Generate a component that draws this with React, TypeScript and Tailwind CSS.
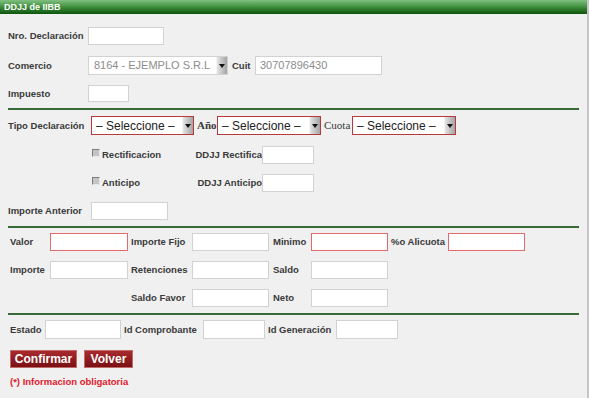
import React from 'react';

const lbl = 'text-[9.5px] font-bold text-[#3a3a3a] whitespace-nowrap leading-none';
const box = 'h-full bg-white border border-[#d2d2d2] shrink-0';
const boxRed = 'h-full bg-white border border-[#e26a6a] shrink-0';

function DropBtn() {
  return (
    <div className="w-[11px] h-full shrink-0 flex items-center justify-center bg-gradient-to-r from-[#e4e4e4] via-[#c4c4c4] to-[#a4a4a4] border-l border-[#f4f4f4]">
      <svg width="6" height="4" viewBox="0 0 6 4">
        <path d="M0 0h6L3 4z" fill="#111" />
      </svg>
    </div>
  );
}

function Seleccione({ w }: { w: string }) {
  return (
    <div className={`h-full flex items-stretch bg-white border border-[#b8383b] shrink-0 ${w}`}>
      <span className="flex-1 flex items-center pl-[4px] text-[12px] text-[#222] whitespace-nowrap">– Seleccione –</span>
      <DropBtn />
    </div>
  );
}

function Check() {
  return (
    <span className="w-[8px] h-[8px] mb-[4px] shrink-0 bg-[#c4c4c4] border-t border-l border-[#7c7c7c] border-b border-r border-b-[#e8e8e8] border-r-[#e8e8e8]" />
  );
}

function Line({ mt }: { mt: string }) {
  return <div className={`ml-[8px] w-[571px] h-[2px] bg-[#3a6a3a] ${mt}`} />;
}

export default function App() {
  return (
    <div className="w-[589px] h-[398px] overflow-hidden bg-[#f0f0f0] border-r-2 border-[#c6c6c6] font-['Liberation_Sans',Arial,sans-serif]">
      <div className="h-[14px] flex items-center pl-[4px] bg-gradient-to-b from-[#80c080] via-[#3e8e3e] to-[#0b560b]">
        <span className="text-[9px] font-bold text-white leading-none">DDJJ de IIBB</span>
      </div>

      <div className="flex items-center h-[18px] mt-[13px] pl-[8px]">
        <span className={`${lbl} w-[80px]`}>Nro. Declaración</span>
        <div className={`${box} w-[76px]`} />
      </div>

      <div className="flex items-center h-[19px] mt-[11px] pl-[8px]">
        <span className={`${lbl} w-[80px]`}>Comercio</span>
        <div className="w-[140px] h-full flex items-stretch bg-white border border-[#d2d2d2] shrink-0">
          <span className="flex-1 flex items-center pl-[5px] text-[11px] text-[#8c8c8c] whitespace-nowrap">8164 - EJEMPLO S.R.L</span>
          <DropBtn />
        </div>
        <span className={`${lbl} w-[27px] pl-[4px]`}>Cuit</span>
        <div className={`${box} w-[127px] flex items-center pl-[4px] text-[11px] text-[#8c8c8c]`}>30707896430</div>
      </div>

      <div className="flex items-center h-[17px] mt-[10px] pl-[8px]">
        <span className={`${lbl} w-[80px]`}>Impuesto</span>
        <div className={`${box} w-[41px]`} />
      </div>

      <Line mt="mt-[6px]" />

      <div className="flex items-center h-[19px] mt-[6px] pl-[8px]">
        <span className={`${lbl} w-[83px]`}>Tipo Declaración</span>
        <Seleccione w="w-[103px]" />
        <span className="w-[23px] pl-[3px] text-[11px] font-bold text-[#3a3a3a] font-['Liberation_Serif',serif] leading-none">Año</span>
        <Seleccione w="w-[104px]" />
        <span className="w-[31px] pl-[3px] text-[11px] text-[#3a3a3a] font-['Liberation_Serif',serif] leading-none">Cuota</span>
        <Seleccione w="w-[104px]" />
      </div>

      <div className="flex items-center h-[18px] mt-[11px] pl-[92px]">
        <Check />
        <span className={`${lbl} w-[92px] pl-[2px]`}>Rectificacion</span>
        <span className={`${lbl} w-[70px] text-right`}>DDJJ Rectifica</span>
        <div className={`${box} w-[52px]`} />
      </div>

      <div className="flex items-center h-[18px] mt-[10px] pl-[92px]">
        <Check />
        <span className={`${lbl} w-[92px] pl-[2px]`}>Anticipo</span>
        <span className={`${lbl} w-[70px] text-right`}>DDJJ Anticipo</span>
        <div className={`${box} w-[52px]`} />
      </div>

      <div className="flex items-center h-[18px] mt-[10px] pl-[8px]">
        <span className={`${lbl} w-[83px]`}>Importe Anterior</span>
        <div className={`${box} w-[77px]`} />
      </div>

      <Line mt="mt-[6px]" />

      <div className="flex items-center h-[18px] mt-[5px] pl-[10px]">
        <span className={`${lbl} w-[40px]`}>Valor</span>
        <div className={`${boxRed} w-[78px]`} />
        <span className={`${lbl} w-[64px] pl-[3px]`}>Importe Fijo</span>
        <div className={`${box} w-[77px]`} />
        <span className={`${lbl} w-[42px] pl-[4px]`}>Minimo</span>
        <div className={`${boxRed} w-[77px]`} />
        <span className={`${lbl} w-[60px] pl-[3px]`}>%o Alicuota</span>
        <div className={`${boxRed} w-[77px]`} />
      </div>

      <div className="flex items-center h-[18px] mt-[10px] pl-[10px]">
        <span className={`${lbl} w-[40px]`}>Importe</span>
        <div className={`${box} w-[78px]`} />
        <span className={`${lbl} w-[64px] pl-[3px]`}>Retenciones</span>
        <div className={`${box} w-[77px]`} />
        <span className={`${lbl} w-[42px] pl-[4px]`}>Saldo</span>
        <div className={`${box} w-[77px]`} />
      </div>

      <div className="flex items-center h-[18px] mt-[10px] pl-[128px]">
        <span className={`${lbl} w-[64px] pl-[3px]`}>Saldo Favor</span>
        <div className={`${box} w-[77px]`} />
        <span className={`${lbl} w-[42px] pl-[4px]`}>Neto</span>
        <div className={`${box} w-[77px]`} />
      </div>

      <Line mt="mt-[6px]" />

      <div className="flex items-center h-[19px] mt-[5px] pl-[10px]">
        <span className={`${lbl} w-[35px]`}>Estado</span>
        <div className={`${box} w-[76px]`} />
        <span className={`${lbl} w-[82px] pl-[3px]`}>Id Comprobante</span>
        <div className={`${box} w-[62px]`} />
        <span className={`${lbl} w-[71px] pl-[3px]`}>Id Generación</span>
        <div className={`${box} w-[62px]`} />
      </div>

      <div className="flex items-center gap-[7px] h-[18px] mt-[11px] pl-[10px]">
        <button className="w-[67px] h-full flex items-center justify-center text-[12px] font-bold text-white leading-none bg-gradient-to-b from-[#a82a2e] to-[#7a0f13] border border-[#c06a6a]">
          Confirmar
        </button>
        <button className="w-[49px] h-full flex items-center justify-center text-[12px] font-bold text-white leading-none bg-gradient-to-b from-[#a82a2e] to-[#7a0f13] border border-[#c06a6a]">
          Volver
        </button>
      </div>

      <div className="mt-[9px] pl-[10px] text-[9.5px] font-bold text-[#e3172b] leading-none">(*) Informacion obligatoria</div>
    </div>
  );
}
